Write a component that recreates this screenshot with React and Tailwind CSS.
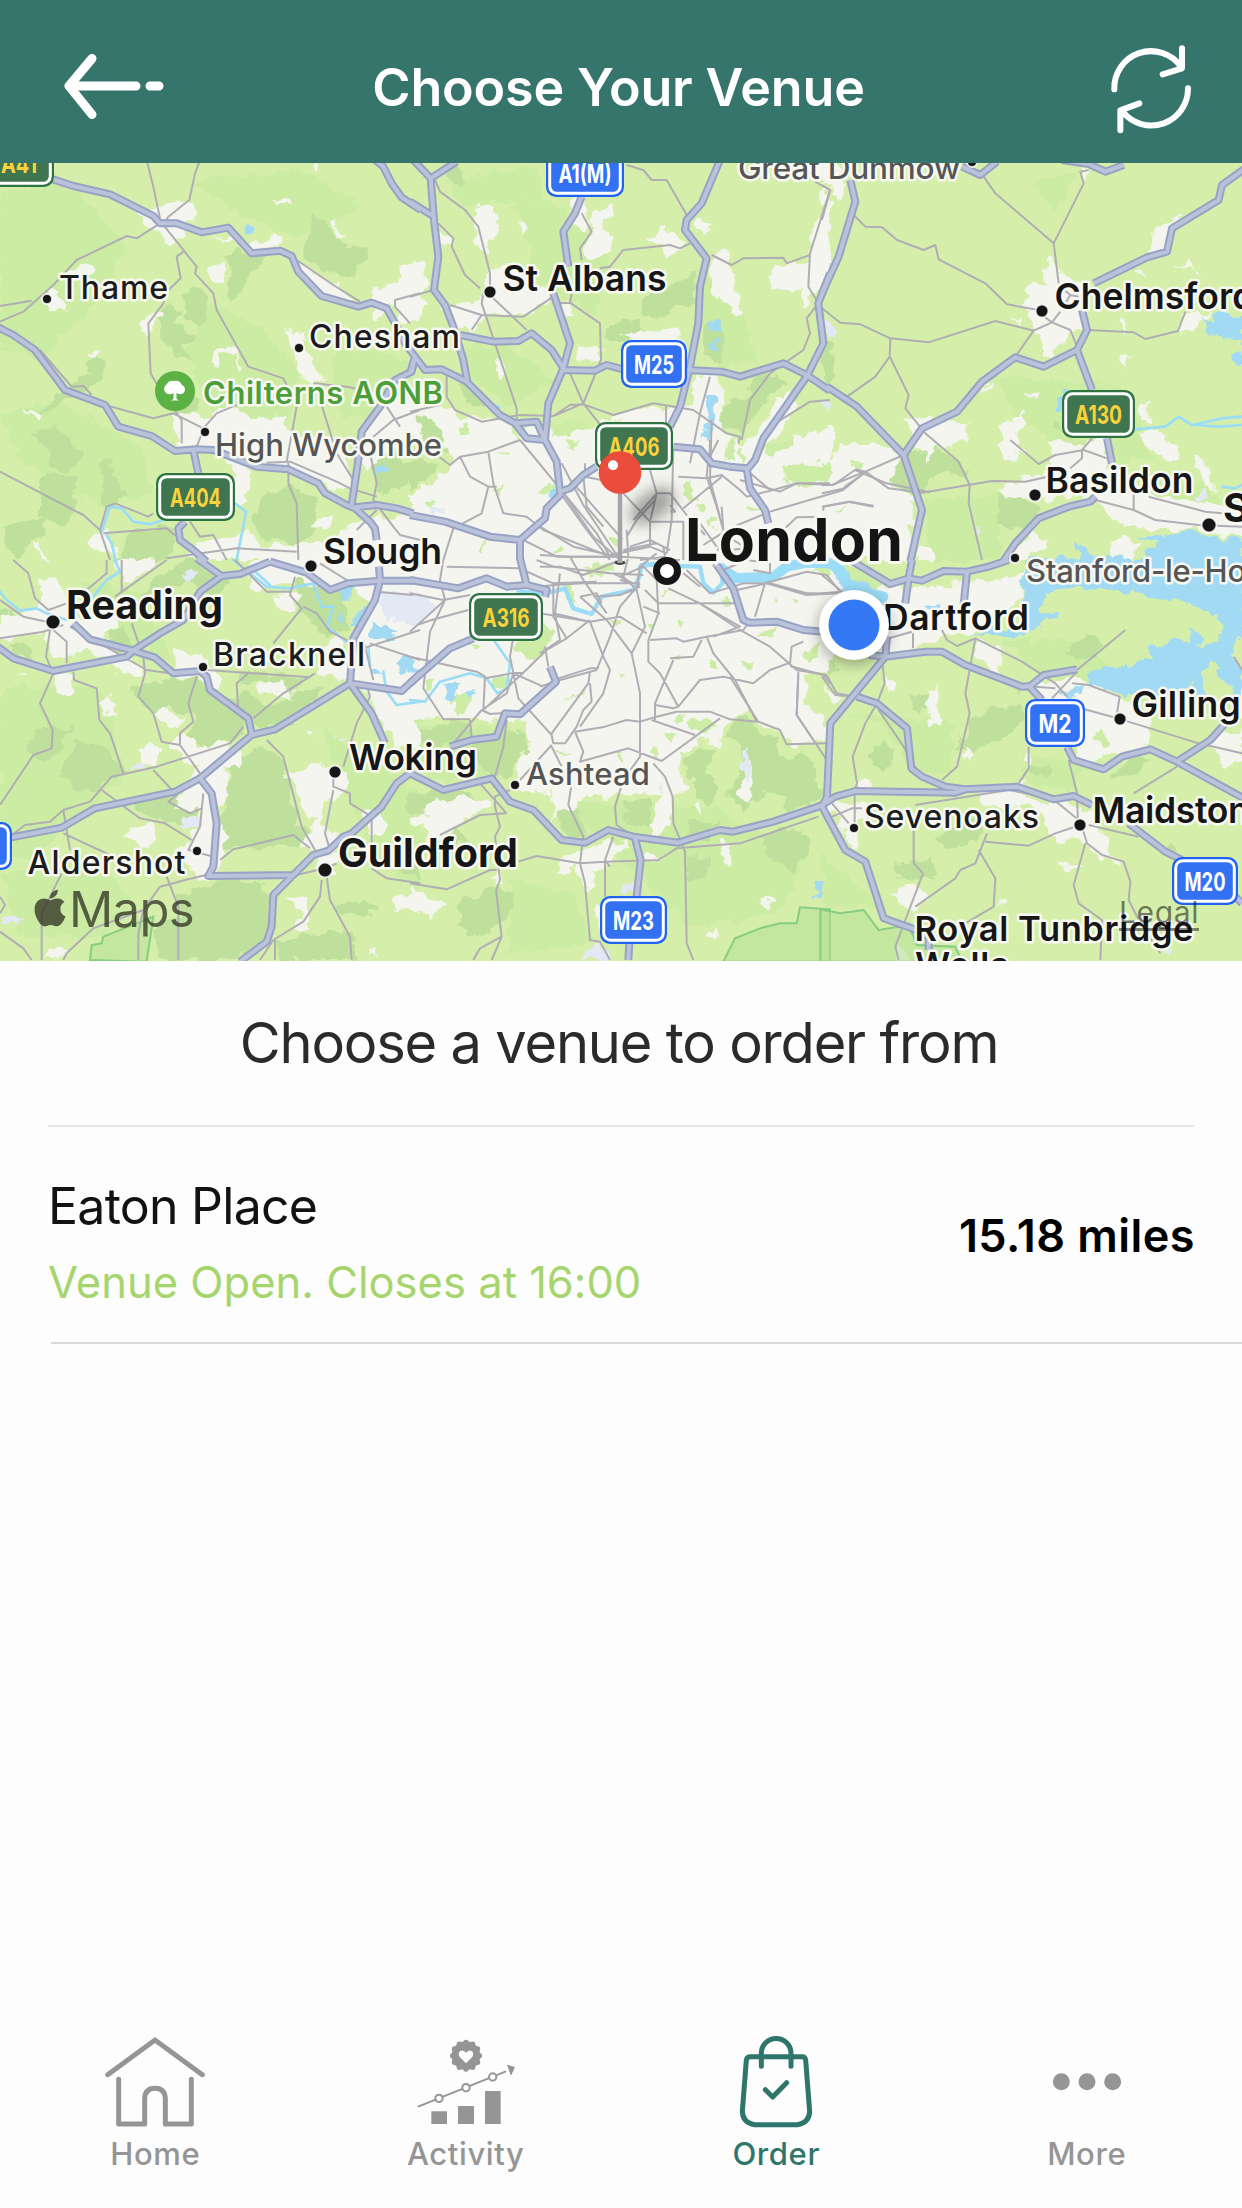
import { FaApple } from 'react-icons/fa'

// Map geometry is stored in tiles. x/y is the tile origin on the page,
// the path data inside a tile is at 3x resolution.
const TILES = [
  {
    id: 'nw',
    x: 0,
    y: 160,
    shade: [
      'M0 100L200 60 380 260 300 420 120 600 0 560Z',
      'M600 420L760 480 900 640 840 900 640 760 560 600Z',
      'M0 760L180 720 420 860 460 1000 300 1040 60 900Z',
      'M560 60L900 30 1100 140 900 240 700 160Z',
      'M1000 560L1240 600 1200 800 1000 760Z',
    ],
    forest: [
      'M935 160L985 185 1010 225 1045 270 1110 268 1100 300 1070 320 1065 350 1000 345 960 320 915 290 930 240Z',
      'M665 290L720 270 790 290 750 340 735 390 690 425 680 370 705 340Z',
      'M548 400L590 388 622 420 618 480 598 500 560 480Z',
      'M505 425L545 460 520 490 580 520 555 560 580 600 530 585 490 545 500 510 470 480Z',
      'M215 680L265 640 270 605 290 585 320 620 318 650 250 690 200 715 170 745 100 772 130 740Z',
      'M95 825L160 795 215 845 255 880 220 920 190 935 150 910 135 860Z',
      'M300 905L335 890 345 945 370 965 380 1010 340 1040 300 1035 310 960Z',
      'M120 950L160 940 235 955 215 1000 245 1030 190 1095 120 1070Z',
      'M20 1090L90 1070 140 1080 130 1120 90 1160 60 1200 10 1150Z',
      'M470 690L540 660 600 720 590 760 540 760Z',
      'M870 900L950 880 1010 920 990 960 930 930Z',
      'M780 1010L860 980 960 1010 950 1100 900 1150 790 1140 760 1090Z',
      'M1110 900L1180 880 1250 930 1200 990 1140 990Z',
      'M380 1110L520 1100 530 1170 480 1200 360 1200Z',
    ],
    urban: [
      'M415 170L470 135 580 130 590 160 550 205 560 230 510 265 470 220Z',
      'M630 232L720 240 790 245 820 222 850 240 830 262 760 270 690 245Z',
      'M620 330L650 308 675 325 670 355 640 370Z',
      'M818 122L865 112 862 130 838 138Z',
      'M195 335L265 318 275 340 230 365 195 365Z',
      'M125 420L170 390 200 450 150 445Z',
      'M420 490L470 445 505 460 470 485 430 520Z',
      'M635 570L710 555 725 625 715 630 705 570 660 585 665 620 645 620Z',
      'M850 505L925 520 905 560 940 600 970 660 940 680 890 640 890 580Z',
      'M890 310L990 365 1060 410 1050 425 960 400 900 350Z',
      'M1120 380L1180 375 1200 330 1260 305 1260 470 1210 500 1180 440 1115 470Z',
      'M525 760L620 770 690 730 760 780 860 770 860 820 1000 830 1050 900 1060 980 1000 990 860 920 740 930 740 1020 700 1030 700 920 640 870 530 870 520 800Z',
      'M960 1080L1000 1080 980 1110 930 1100Z',
      'M110 1140L150 1200 120 1200Z',
      'M260 1140L310 1110 360 1190 310 1180Z',
      'M600 1140L740 1115 790 1160 1000 1140 1060 1080 1260 1060 1260 1200 560 1200Z',
      'M985 170L1010 180 1035 235 1020 235 1005 195Z',
      'M945 10L960 10 960 35 948 35Z',
      'M1150 720L1240 700 1260 850 1150 880 1100 930 1060 860Z',
      'M80 745L115 770 105 785 85 770Z',
      'M270 570L300 565 290 590Z',
    ],
    lake: ['M733 208L748 196 766 206 752 222 738 218Z', 'M1132 912L1152 905 1162 930 1145 945 1135 935Z'],
    river: ['M305 1115L330 1040 365 1045 400 1085 450 1093 490 1080', 'M320 1125L335 1150 347 1200', 'M705 1030L738 1055 710 1200'],
    minor: [
      'M440 0L460 80 482 185',
      'M600 0L585 40 568 120 505 170 490 195',
      'M0 438L95 422',
      'M0 485L70 455 160 375 230 300 380 228 410 235 480 190',
      'M490 195L550 270 590 320 585 340 640 400 650 450 745 620 850 655 890 740 860 905',
      'M550 275L530 290 542 355 500 395 490 430 445 490 452 640 480 690 545 780 545 850',
      'M120 570L215 680 250 678 275 705',
      'M315 735L460 775 520 760 610 805 650 760 720 730',
      'M890 300L1000 375 1080 425',
      'M865 905L865 970 890 1030 895 1200',
      'M800 908L870 905 1010 965 1050 985 1130 1010',
      'M960 720L1010 880 1060 960',
      'M0 935L220 1050 250 1065 300 1110 330 1200',
      'M300 1110L320 1040 345 1030 445 1070 460 1060',
      'M310 1120L500 1105 530 1130',
      'M570 1085L600 1130 640 1125 680 1200',
      'M500 1195L710 1165 890 1175',
      'M1230 490L1185 440 1185 420 1260 400',
      'M1120 830L1180 780 1260 750M1160 740L1200 800',
      'M1110 880L1130 970 1120 1020 1180 1100 1200 1125 1260 1140',
      'M940 670L1040 680 1090 690',
      'M1130 1050L1070 1110',
      'M610 810L590 860',
    ],
    major: [
      'M150 55L220 78 330 103 460 168 480 190 530 190 605 217 685 203 755 280 840 272 875 288 895 335 965 408 1075 440 1115 428 1160 445 1185 490 1215 550 1245 590',
      'M1125 0L1150 20 1175 70 1205 112 1262 150',
      'M-10 500L40 525 105 570 195 690 315 735 355 800 455 828 525 873 590 868 640 870 770 920 865 928 955 970 975 1000 1040 1035 1065 1045 1110 1085 1125 1105 1130 1140',
      'M580 870L595 940',
      'M555 1085L535 1105 540 1140 580 1170 620 1205',
      'M1245 590L1235 635 1185 660 1140 740 1085 815 1075 900 1055 1035',
      'M1065 1042L1130 1035 1190 1045 1240 1060',
    ],
  },
  {
    id: 'n',
    x: 410,
    y: 160,
    shade: [
      'M310 130L420 120 600 300 560 460 400 380Z',
      'M860 320L1000 460 1040 600 930 620 880 480Z',
      'M100 60L380 20 400 120 160 140Z',
      'M160 560L300 560 440 660 300 740 180 650Z',
    ],
    forest: [
      'M700 420L760 380 830 360 860 330 860 430 810 440 750 470 690 470Z',
      'M590 510L640 480 690 490 700 520 640 545 590 540Z',
      'M890 500L935 480 935 600 905 610 885 590Z',
      'M1040 650L1100 640 1130 670 1090 700 1040 760 990 820 935 800 940 740 1000 720Z',
      'M0 765L70 770 110 830 120 880 60 860 0 820Z',
      'M0 905L70 910 90 940 0 990Z',
      'M110 30L155 30 160 75 125 70Z',
      'M150 650L210 700 250 760 150 710Z',
    ],
    urban: [
      'M185 165L215 135 250 150 268 200 235 240 245 280 205 260 185 240 205 215Z',
      'M320 200L335 185 355 205 335 225Z',
      'M240 330L300 320 420 400 400 440 340 470 240 460 190 520 120 500 105 440 210 420Z',
      'M60 210L120 225 125 250 95 255Z',
      'M0 310L30 310 60 370 40 430 0 440Z',
      'M560 150L615 125 610 170 580 200 605 240 590 285 540 300 520 280 540 210Z',
      'M480 110L520 120 540 200 515 215 490 160Z',
      'M715 235L765 205 830 245 810 260 770 290 750 255Z',
      'M845 190L880 165 910 200 885 235Z',
      'M905 310L930 270 965 290 970 320 975 400 1000 460 975 470 960 440 930 410 900 395Z',
      'M1070 350L1110 315 1180 310 1200 250 1190 220 1230 180 1260 180 1260 360 1210 400 1200 460 1180 450 1180 390 1090 385Z',
      'M500 560L560 550 570 600 520 605 500 590Z',
      'M640 520L720 515 800 500 830 560 840 600 700 560Z',
      'M425 430L470 420 490 470 430 450Z',
      'M255 590L290 600 295 640 270 660Z',
      'M0 720L60 715 150 770 250 780 330 830 360 780 430 800 530 810 690 735 760 745 840 730 870 640 935 620 935 740 940 820 1000 860 1070 790 1100 710 1150 695 1150 740 1120 800 1060 860 1260 800 1260 1210 0 1210 0 1000 90 960 120 900 80 790 0 750Z',
      'M1235 90L1260 80 1260 180 1230 190Z',
      'M1190 0L1260 0 1260 60 1240 60Z',
    ],
    park: [
      'M430 790L500 770 535 800 480 830 420 840Z',
      'M1120 925L1260 900 1260 970 1150 980Z',
      'M1050 860L1150 835 1140 870 1080 890Z',
      'M985 880L1005 860 1000 920Z',
      'M35 1035L70 1015 60 1050Z',
      'M205 1170L235 1120 220 1180Z',
      'M250 990L285 985 265 1010Z',
      'M425 1170L450 1155 470 1170 440 1180Z',
      'M595 1135L640 1130 620 1170Z',
      'M150 790L175 800 160 825Z',
      'M270 885L295 880 280 890Z',
      'M830 970L850 990 870 1030 840 1010Z',
      'M380 1000L430 970 440 990 400 1010Z',
      'M590 790L640 780 600 800Z',
    ],
    airport: ['M50 1050L100 1040 105 1060 70 1062Z', 'M1240 720L1260 720 1260 755 1245 750Z'],
    lake: [
      'M905 482L935 478 935 508 905 510Z',
      'M898 545L920 540 915 575 900 570Z',
      'M895 705L922 705 912 800 885 842 868 835 880 780 892 760Z',
      'M408 1015L430 990 445 995 425 1018Z',
      'M250 735L275 735 270 755Z',
    ],
    minor: [
      'M75 60L90 95 165 150 205 200 240 340 240 390',
      'M85 190L130 235 125 260 165 345 210 385',
      'M0 410L70 390',
      'M120 435L215 465 340 470 430 410',
      'M220 400L215 430 320 745 320 790',
      'M245 410L350 510',
      'M515 160L545 215 510 265 515 300',
      'M215 465L185 510',
      'M450 430L480 428 570 490 573 600 520 730 430 768',
      'M480 640L520 730 575 800',
      'M480 428L485 400',
      'M650 15L700 30 725 60 770 60 830 165',
      'M570 325L600 320 640 270 780 255 810 265 840 250',
      'M905 285L965 315 1000 295 1120 293 1130 310 1200 285',
      'M1215 65L1260 90 1200 280 1195 380 1225 430 1190 475 1200 520 1180 570 1080 640 1020 720 995 840',
      'M110 640L110 710 135 750 215 785 330 765 430 768 480 735 520 733 610 765 730 730 850 750 950 820 990 830 985 850',
      'M900 650L870 760 840 910',
      'M905 780L900 960 930 1070',
      'M0 825L120 915 150 890 235 875 330 840',
      'M150 890L180 950 235 980 260 980',
      'M235 875L250 970 280 1060 350 1070 400 1110 600 1190',
      'M235 980L215 1060 130 1105 100 1200',
      'M330 840L560 1120 600 1190',
      'M455 910L520 1035 590 1140 630 1200',
      'M455 1005L530 1110 600 1200',
      'M0 755L90 735',
      'M340 1140L440 1190 620 1190',
      'M525 910L525 950 600 965',
      'M768 740L768 810',
      'M990 960L1110 995 1160 970 1260 970',
      'M1260 720L1200 725 1080 800',
    ],
    major: [
      'M10 0L62 55 140 5',
      'M62 55L72 180 85 290 72 390 105 435 130 500 160 600 172 665',
      'M0 125L72 170',
      'M150 525L250 545 325 543 365 520 425 570 460 625',
      'M515 110L495 160 460 215 475 320',
      'M430 400L480 550 460 625 415 730 405 840',
      'M460 630L555 632 590 615 640 628',
      'M830 630L935 635 990 650 1120 610 1190 645 1260 692',
      'M930 0L875 130 830 180 825 210 890 295 870 380 865 490 840 620 810 740 780 800',
      'M0 640L15 590 45 630 95 628 130 645 170 665 270 765 315 790 380 785 405 840 350 835 315 790',
      'M405 840L440 905 450 995 480 985 520 945 560 920',
      'M455 1000L410 1045 405 1075 330 1140 330 1200',
      'M0 1065L105 1085 240 1130 330 1140',
      'M790 860L870 868 905 910 960 920 1010 925 1020 985 1065 1050 1075 1090',
      'M1010 930L1035 900 1060 835 1190 650 1215 600 1240 550 1225 430 1260 340',
    ],
  },
  {
    id: 'ne',
    x: 822,
    y: 160,
    shade: ['M500 640L900 680 1000 900 800 900 600 780Z', 'M620 60L760 40 700 160Z', 'M300 1020L520 1000 540 1200 320 1200Z', 'M900 1010L1160 960 1200 1060 1000 1040Z'],
    forest: [
      'M0 540L35 545 42 640 15 680 0 650Z',
      'M210 905L300 870 370 870 440 930 430 950 350 940 290 1000 200 980Z',
      'M520 1000L600 1010 650 1040 640 1090 580 1105 530 1090Z',
      'M945 1010L1000 1010 1030 1055 990 1055Z',
      'M690 790L715 780 720 810 695 805Z',
    ],
    urban: [
      'M0 0L50 0 70 80 60 115 35 110 30 70 0 70Z',
      'M0 180L30 185 20 290 0 310Z',
      'M610 380L665 375 660 330 690 285 720 340 790 380 790 510 740 520 690 590 665 590 655 520 620 480Z',
      'M985 215L1030 180 1075 170 1050 205 1035 290 985 270Z',
      'M1055 325L1100 295 1130 340 1100 320Z',
      'M550 475L590 475 590 490Z',
      'M890 590L920 585 905 615Z',
      'M890 470L905 470 915 535 895 500Z',
      'M1090 460L1170 460 1120 500 1070 520Z',
      'M605 695L655 700 640 718Z',
      'M460 700L515 655 500 680Z',
      'M245 775L330 775 350 790 445 785 430 840 370 850 320 900 280 850Z',
      'M530 795L605 755 615 780 580 820 600 890 550 895 535 850Z',
      'M685 830L760 860 850 830 860 920 1000 1000 1200 1040 1260 1060 1260 1140 1130 1110 1000 1110 870 1090 820 1020 700 1010 600 1020 520 985 700 930 690 870Z',
      'M950 815L1010 810 1080 900 1060 910 960 840Z',
      'M945 740L985 735 990 780 950 780Z',
      'M1120 890L1140 890 1185 1000 1150 980Z',
      'M0 930L50 855 150 850 240 890 200 960 220 990 275 1000 265 1200 0 1200Z',
      'M560 1180L620 1120 680 1150 600 1200Z',
      'M860 1150L900 1130 960 1150 930 1200 870 1200Z',
      'M290 1170L330 1170 330 1200 290 1200Z',
      'M940 330L960 330 965 360Z',
      'M780 30L805 30 785 65Z',
    ],
    park: ['M35 1045L60 1040 50 1055Z', 'M85 910L130 900 110 930Z'],
    airport: ['M10 480L30 485 30 525 10 525Z', 'M5 730L35 735 20 755Z', 'M1110 1010L1155 990 1160 1020 1120 1025Z', 'M450 1110L480 1115 460 1125Z'],
    lake: [
      'M1120 475L1160 480 1180 455 1260 465 1260 545 1210 540 1170 525 1150 490Z',
      'M1225 600L1260 575 1260 615 1230 612Z',
      'M705 715L722 690 745 695 720 750 705 750Z',
      'M930 1120L1030 1130 1060 1115 1100 1115 1260 1145 1260 1200 780 1200 765 1145 830 1185 960 1200 1010 1150Z',
    ],
    river: ['M940 808L1030 800 1070 770 1110 795 1200 775 1260 770', 'M1120 795L1190 800 1260 795', 'M1200 980L1240 985 1260 975'],
    minor: [
      'M485 50L520 100 695 250',
      'M800 30L775 35 785 70 695 250 710 370',
      'M95 165L130 200 180 202 225 240 305 270 340 255 350 298 490 370 555 433 650 450',
      'M0 445L55 488 115 493 205 535 320 547 520 483 635 512 690 487 745 510 765 560',
      'M205 535L203 590 260 705 250 745 310 820 410 905 443 975 440 1030 480 1200',
      'M203 590L160 650 75 710',
      'M635 512L580 590',
      'M800 510L935 517 970 537 1068 513 1090 455',
      'M720 385L745 405 770 410M745 405L730 430',
      'M660 465L690 487 715 455',
      'M245 885L130 935 30 975 0 975',
      'M100 928L130 935 200 985 300 998 510 963 610 965 700 945',
      'M130 935L70 985 0 1000',
      'M0 1040L80 1025 155 1040',
      'M565 840L650 912 700 885 785 870 855 895',
      'M810 835L780 870 780 895 745 925',
      'M820 1020L935 1050 1000 1080 1130 1095 1260 1100',
      'M935 1050L935 1000M980 1010L1150 1055 1200 1060',
      'M0 75L25 90 0 180',
    ],
    major: [
      'M420 20L475 45 525 5',
      'M720 0L800 12 850 35 905 15',
      'M1270 25L1200 75 1190 120 1050 205 1035 275 975 292 815 370',
      'M85 60L100 125 50 290 0 400',
      'M15 680L105 740 245 885 300 1050 265 1205',
      'M245 885L300 805 405 755 480 665 580 592 665 620 765 570 795 510 780 450',
      'M765 570L810 690',
      'M855 835L870 910',
      'M820 1010L805 1025 740 1040 650 1075 580 1150 545 1202',
    ],
  },
  {
    id: 'sw',
    x: 0,
    y: 560,
    shade: ['M0 380L300 380 380 640 100 900 0 880Z', 'M240 60L420 100 520 300 300 220Z', 'M960 500L1260 700 1260 1000 1120 900Z', 'M0 940L300 900 420 1040 280 1140 60 1120Z'],
    forest: [
      'M85 540L130 500 220 505 180 560 160 600 90 590Z',
      'M180 640L220 540 300 560 380 640 330 650 290 700 230 690Z',
      'M380 400L460 360 590 350 640 400 740 480 730 520 640 560 560 540 590 480 520 440 470 470 420 430Z',
      'M560 0L700 60 640 110 560 60 420 120 460 60Z',
      'M700 600L790 560 840 590 900 800 960 830 860 860 740 860 660 870 680 690Z',
      'M540 1000L680 960 800 970 810 1100 780 1150 700 1200 480 1200 460 1110 540 1070Z',
      'M830 1150L940 1120 1060 1110 1070 1200 830 1200Z',
      'M330 220L370 200 400 260 370 280 320 250Z',
      'M730 330L920 350 880 400 800 360 720 370Z',
      'M640 430L740 400 820 440 900 400 980 390 870 490 780 500Z',
      'M380 730L500 700 600 740 560 800 470 780Z',
      'M880 60L1000 60 1060 200 980 230 900 150Z',
      'M0 150L40 160 30 200 0 200Z',
      'M20 250L90 260 110 300 40 290Z',
      'M1010 1040L1100 1020 1130 1060 1030 1070Z',
      'M1170 870L1260 880 1260 960 1190 930Z',
    ],
    urban: [
      'M115 60L160 45 195 90 190 130 260 180 370 130 350 200 310 230 420 320 440 350 350 330 270 270 160 300 130 220 0 240 0 170 110 150 120 110Z',
      'M300 430L320 405 350 440 350 470 305 460Z',
      'M160 340L220 345 210 400 165 395Z',
      'M450 460L500 445 555 480 530 510 480 495Z',
      'M530 270L610 280 630 320 670 350 670 400 630 390 600 350 530 350Z',
      'M420 570L450 550 485 580 460 610 420 600Z',
      'M510 550L560 520 600 560 680 545 720 570 730 620 680 620 680 700 660 750 680 880 650 950 600 960 550 900 500 930 560 850 600 800 590 740 510 740 560 690 600 620 540 590Z',
      'M370 815L460 780 455 860 430 860Z',
      'M850 650L960 615 1050 640 1050 690 980 720 960 800 1010 820 1010 870 950 900 960 940 1010 950 1010 900 1040 880 900 860 950 790 920 740 880 680Z',
      'M860 1010L930 1010 930 1110 900 1120 880 1110 910 1050Z',
      'M765 370L820 365 885 390 880 420 840 400 780 400Z',
      'M820 110L900 90 890 150 840 150Z',
      'M350 0L460 0 420 50 370 70Z',
      'M720 30L800 0 1260 0 1260 560 1180 560 1120 440 1090 360 1040 350 1060 240 1100 130 1050 60 990 100 900 60 780 90Z',
      'M960 260L1030 230 1050 360 960 340Z',
      'M1170 1000L1260 1010 1260 1060 1170 1040Z',
      'M150 1165L210 1160 160 1200 130 1200Z',
      'M1080 770L1130 740 1170 800 1120 830Z',
      'M920 515L940 520 930 540Z',
      'M1110 1155L1130 1155 1120 1190Z',
      'M980 0L1150 0 1130 40 1000 50Z',
      'M50 340L70 340 60 352Z',
    ],
    airport: [
      'M1150 95L1260 100 1260 195 1150 175Z',
      'M400 605L440 600 445 630 400 632Z',
      'M535 800L570 765 600 765 590 800 540 808Z',
      'M550 40L590 30 580 55 560 65Z',
      'M5 1075L75 1075 50 1095 10 1095Z',
      'M1005 530L1030 530 1025 550Z',
    ],
    lake: [
      'M1008 95L1035 82 1062 92 1050 125 1020 128Z',
      'M1115 185L1150 190 1186 215 1170 238 1118 238Z',
      'M1075 145L1095 150 1082 190 1060 195Z',
      'M1188 305L1240 292 1256 330 1205 348Z',
      'M1010 150L1030 165 1040 190 1010 190Z',
      'M1115 320L1140 322 1150 345 1120 342Z',
      'M1060 358L1090 358 1070 370Z',
    ],
    river: [
      'M0 95L20 120 60 152 110 145 140 160 200 180',
      'M280 110L320 60 360 35 345 0',
      'M700 0L750 40 800 80 870 85 940 70 965 140 1000 140 980 200 1040 245',
      'M760 30L810 75M1150 335L1160 395 1190 435 1260 425',
      'M1105 260L1110 320',
    ],
    reserve: ['M270 1200L275 1155 305 1150 310 1130 460 1070 440 1205Z'],
    minor: [
      'M40 0L85 40 105 115 145 150',
      'M320 0L320 40 260 90M145 150L200 130',
      'M365 0L365 95M500 0L345 110',
      'M0 235L130 215 190 195',
      'M0 120L70 170 140 185',
      'M150 210L138 290 160 340 120 430 158 510 155 565 100 585 0 735',
      'M160 210L200 245 200 310',
      'M220 335L222 360 290 385 298 480 330 520 370 640',
      'M395 190L430 290 435 340 415 410 460 460 485 545 540 555 600 640',
      'M590 350L565 430 580 485 540 520 540 555',
      'M210 200L290 245 440 330 510 340',
      'M620 330L930 352',
      'M945 340L850 400 760 475',
      'M730 500L690 550 470 620 335 650 270 725 190 750 150 785 75 795 30 830',
      'M305 690L420 775 495 790 575 840',
      'M460 630L530 705 505 725 570 760 605 745',
      'M610 700L600 800 565 870 640 890',
      'M190 820L330 885M190 750L210 870',
      'M185 940L125 1060 125 1200',
      'M660 900L700 868 880 825 930 865',
      'M800 540L850 590 905 800 945 870',
      'M1000 690L975 820 990 870',
      'M1000 640L1000 680 1050 700 1050 730 1115 770 1115 850',
      'M715 450L710 370 750 335',
      'M820 250L905 145 870 105 885 50',
      'M705 0L800 95 875 95',
      'M910 140L950 160 990 215 1090 265 1260 210',
      'M1090 240L1120 360M1110 250L1260 300',
      'M1100 375L1110 410 1070 490 1030 620',
      'M965 960L960 1010 910 1085 820 1140 780 1200',
      'M980 950L990 1020 1050 1130 1055 1200M825 1140L825 1200',
      'M1115 925L1160 955 1260 970',
      'M190 1200L200 1180 280 1105 430 1050 480 980 555 960 640 940',
      'M500 950L535 1040 535 1200M430 1050L415 1120 415 1200',
      'M0 1115L70 1165 95 1200M0 1060L15 1035 0 1010',
      'M960 10L1040 60M1130 95L1240 105',
      'M890 945L975 925 1010 910',
    ],
    major: [
      'M-10 258L40 295 160 333 380 290 400 272 480 220 550 180 600 95 665 48 720 42 810 5',
      'M590 -5L665 48',
      'M220 190L270 238 400 272 465 293 520 340 600 333 620 350 630 390 745 475 755 520',
      'M810 5L920 38 990 90 1045 70 1140 62 1240 62',
      'M1137 20L1140 62 1125 120 1060 235 1050 370',
      'M1050 370L1205 393 1262 340',
      'M1050 370L825 508 755 525 600 655 525 695 285 745 185 803 30 833',
      'M600 655L635 700 650 790 640 920 625 948 885 945',
      'M1050 370L1115 460 1155 550',
      'M720 1205L800 1145 815 1100 820 1005 940 885 985 872 1030 830 1055 820 1145 740 1190 670 1230 640',
    ],
  },
  {
    id: 's',
    x: 410,
    y: 560,
    shade: ['M430 720L900 740 1200 880 1100 1060 840 1100 600 860Z', 'M300 960L500 1000 540 1150 300 1180Z', 'M0 500L300 500 260 640 60 660Z'],
    forest: [
      'M940 520L1000 470 1060 520 1110 540 1110 600 1180 570 1210 610 1230 700 1200 740 1130 760 1130 700 1060 700 1000 760 950 700 1000 620 990 560Z',
      'M820 600L870 550 910 570 890 640 930 680 900 740 850 700Z',
      'M190 540L260 510 340 515 360 570 300 640 250 650 190 600Z',
      'M20 520L120 480 180 500 160 550 60 560Z',
      'M0 700L60 690 150 690 230 730 150 740 60 770 0 760Z',
      'M40 810L140 800 180 850 120 850Z',
      'M150 1030L250 980 310 1010 290 1070 200 1130 150 1100Z',
      'M1050 830L1160 800 1200 860 1160 930 1080 900Z',
      'M830 790L930 780 900 830 840 840Z',
      'M440 760L500 740 530 820 460 840Z',
      'M640 730L720 710 720 800 660 790Z',
      'M830 900L900 890 890 950 830 960Z',
      'M410 240L480 225 480 290 430 315 410 290Z',
    ],
    urban: [
      'M0 -5L1265 -5 1265 330 1180 350 1190 430 1260 500 1250 540 1150 555 1110 515 1040 490 1015 440 990 470 940 500 930 570 880 530 800 580 830 690 790 710 780 800 730 830 720 800 750 710 700 690 590 710 530 705 500 740 440 760 430 790 430 700 300 690 360 560 340 490 180 480 100 470 0 490Z',
      'M50 740L130 710 220 715 235 740 150 790 80 850 45 860Z',
      'M0 770L80 760 80 780 30 800 0 800Z',
      'M480 880L600 850 660 840 600 900 550 940 550 980 530 990 500 930 440 940Z',
      'M560 1030L590 1040 600 1110 570 1120Z',
      'M990 690L1005 580 1025 600 1030 720 1015 735 980 700Z',
      'M850 740L870 725 880 765Z',
      'M930 850L970 850 965 920 940 900Z',
      'M1050 1020L1090 1005 1070 1055Z',
      'M890 1130L920 1105 920 1145Z',
      'M0 980L60 1020 110 1030 60 1065 0 1050Z',
      'M240 940L270 930 285 970 260 970Z',
      'M680 890L720 880 750 900 700 910Z',
    ],
    park: [
      'M310 260L380 230 400 190 440 220 420 250 400 290 340 300Z',
      'M460 75L480 70 500 130 470 120Z',
      'M245 350L290 345 290 390 250 385Z',
      'M125 410L165 400 190 415 150 470 130 450Z',
      'M40 350L80 360 70 390 45 385Z',
      'M170 255L215 250 195 270Z',
      'M610 180L640 175 625 200Z',
      'M520 25L580 30 580 60 545 50Z',
      'M800 170L830 180 810 195Z',
      'M700 205L720 200 715 220Z',
      'M1090 130L1105 115 1100 150Z',
      'M1140 115L1165 125 1155 140Z',
      'M1060 210L1110 205 1100 230 1045 240Z',
      'M780 300L815 290 810 310Z',
      'M900 310L930 305 930 330 900 325Z',
      'M985 310L1020 310 1010 325 985 325Z',
      'M625 345L650 350 640 365Z',
      'M805 465L825 460 825 490 810 490Z',
      'M765 525L795 530 790 550 770 540Z',
      'M840 485L890 480 920 490 880 520 840 510Z',
      'M435 570L485 572 460 590Z',
      'M615 585L640 585 640 615Z',
      'M1180 290L1240 250 1230 290 1200 300Z',
      'M470 420L530 380 500 410Z',
      'M1200 30L1260 20 1260 55Z',
      'M930 110L960 115 960 140 930 130Z',
      'M730 570L745 575 745 595 730 590Z',
      'M10 480L60 475 30 495Z',
    ],
    airport: ['M0 105L50 110 80 130 40 190 0 200Z', 'M990 600L1020 565 1025 640 1005 670Z', 'M630 985L655 965 665 995 640 1000Z', 'M510 1190L560 1145 600 1170 600 1200 510 1200Z', 'M740 680L755 675 752 710Z'],
    lake: ['M100 372L145 362 142 412 105 418Z', 'M0 298L20 308 20 340 0 345Z', 'M1222 965L1236 970 1228 1010 1207 1010Z', 'M170 400L200 405 175 412Z'],
    river: ['M0 420L45 425 90 365 180 340 230 355 262 400 290 385 300 310 255 245'],
    riverWide: ['M325 95L410 100 465 85 490 145 545 162 575 110 670 90 688 50 695 15 740 12'],
    reserve: ['M940 1205L975 1135 1050 1105 1110 1090 1160 1090 1170 1042 1260 1048 1260 1205Z'],
    minor: [
      'M0 100L100 120 180 105',
      'M100 0L90 60 105 120 0 215',
      'M175 150L65 180 20 195',
      'M105 120L60 215 50 300 40 385 100 478 180 478',
      'M0 290L200 335 225 350 220 450',
      'M220 450L340 338 410 270 470 235 540 180',
      'M310 230L300 290 325 415 425 525 430 550 465 550 500 500 520 450 545 425',
      'M215 450L240 462 330 455M130 550L215 450 290 400 310 340 400 380',
      'M225 355L305 340 340 338',
      'M405 260L415 320',
      'M445 355L540 325 565 325',
      'M425 520L535 370 540 335M545 425L540 370',
      'M425 560L455 620M425 555L330 660',
      'M290 480L280 560 255 650',
      'M180 480L185 530',
      'M495 515L585 500 650 480 690 485 740 470 800 455 900 455 960 478 1045 485 1110 510 1130 553 1250 550',
      'M495 515L520 575 510 605 655 565 755 603 930 475',
      'M690 480L690 590 640 660 615 740 620 795 670 830',
      'M725 480L855 525',
      'M485 670L475 735 520 830 510 910 525 970 540 1140 570 1145 600 1200',
      'M325 905L380 888 510 910 585 905 745 900 800 865 990 850 1225 770',
      'M730 610L765 650 788 710 790 790 825 875 830 1150 850 1200',
      'M610 830L585 900 585 1010M585 900L600 920',
      'M0 970L110 988 240 930 260 930',
      'M300 690L255 710 255 740 270 800 255 830 270 960 258 990 275 1130 245 1200',
      'M275 1130L210 1165 190 1200M210 670L290 760',
      'M90 825L210 765 290 760',
      'M960 350L1045 485',
      'M1165 345L1160 465 1250 600',
      'M1140 318L1240 345 1260 370',
      'M380 0L430 20 600 40 700 45',
      'M430 70L430 170 470 235M430 160L540 185',
      'M340 30L430 70 560 65M110 20L330 25',
      'M830 30L900 100 1000 70 1080 70 1190 100 1260 100',
      'M600 1045L640 1040',
    ],
    major: [
      'M0 60L145 85 230 55 290 80 350 75 410 90 405 110',
      'M330 -5L350 75',
      'M0 370L120 265 190 235',
      'M420 320L438 365 330 463 285 460 260 530 185 540 120 560 ',
      'M0 640L100 690 245 655 300 725 370 750 455 840 525 848 595 810 670 830 805 848 930 810 970 815 1090 785 1225 740 1236 735',
      'M675 835L692 900 680 1010',
      'M658 1150L655 1200',
      'M920 15L970 85 1000 180 1020 188 1100 185 1180 210 1240 215',
    ],
  },
  {
    id: 'se',
    x: 822,
    y: 560,
    shade: ['M60 460L400 480 380 640 280 640 200 500Z', 'M540 240L780 240 880 360 640 340Z', 'M0 880L180 1040 0 1040Z', 'M600 580L800 620 740 700 600 660Z'],
    forest: [
      'M735 270L790 230 840 250 820 290 770 310Z',
      'M440 500L510 440 590 440 600 490 540 540 450 580 400 570Z',
      'M260 410L350 390 350 460 270 450Z',
      'M870 650L920 600 980 590 940 650 880 665Z',
      'M215 905L330 895 330 965 230 960Z',
      'M340 840L440 780 480 790 460 840 380 860Z',
      'M130 590L190 540 220 570 180 640Z',
      'M0 310L40 300 50 340 20 350Z',
      'M560 360L600 370 590 400Z',
      'M1000 860L1050 850 1060 900Z',
      'M620 625L680 620 680 660 640 650Z',
    ],
    urban: [
      'M0 0L85 0 260 90 600 50 610 0 260 0 610 0 600 120 450 225 370 230 190 300 180 280 0 280Z',
      'M455 240L540 260 530 340 460 290Z',
      'M310 380L350 375 350 500 325 505Z',
      'M190 340L220 370 200 400Z',
      'M640 370L760 340 890 410 1000 480 960 570 880 580 790 610 760 580 720 480 640 420Z',
      'M1160 540L1260 500 1260 610 1200 620Z',
      'M425 560L460 600 420 605Z',
      'M600 600L625 570 620 640 590 690 680 740 690 720 780 730 850 830 860 880 890 910 840 900 770 830 700 850 660 760 530 710 620 650Z',
      'M55 780L110 770 110 860 70 850Z',
      'M100 660L130 650 160 690 110 700Z',
      'M0 740L130 720 130 770 60 780Z',
      'M215 1000L270 970 310 990 320 1020 270 1060 230 1030Z',
      'M705 910L770 905 740 935Z',
      'M535 1020L555 1010 540 1050Z',
      'M225 1150L265 1200 225 1200Z',
      'M460 700L600 690 650 740 480 730Z',
      'M820 500L865 520 880 560 830 560Z',
      'M0 370L60 410 30 420Z',
    ],
    park: ['M830 510L870 550 840 560 825 530Z', 'M90 10L200 60 130 90 80 60Z'],
    airport: ['M1020 1175L1060 1175 1040 1190Z'],
    lake: [
      'M610 -5L1265 -5 1265 230 1235 235 1230 300 1260 330 1260 400 1230 390 1190 330 1160 310 1140 350 1150 400 1100 395 1110 360 1080 400 900 405 800 370 800 330 860 320 920 325 990 290 980 260 1050 235 1130 255 1180 245 1195 190 1150 140 1090 130 930 100 840 90 700 85 660 130 660 160 710 155 710 168 665 180 660 200 600 230 440 225 600 195Z',
      'M1100 200L1140 250 1110 265Z',
      'M10 0L50 10 90 60 150 80 195 120 200 170 100 140Z',
      'M310 140L360 130 370 160 320 150Z',
      'M720 400L790 380 780 410 740 420Z',
    ],
    reserve: ['M-5 1048L55 1060 125 1050 170 1110 260 1095 285 1155 400 1160 420 1205 -5 1205Z'],
    minor: [
      'M360 210L375 240 405 258 460 235 600 305 700 370 735 410',
      'M765 330L910 210',
      'M460 235L430 400 443 460 405 620 360 660',
      'M180 300L188 370 165 430 130 490 92 590 105 670 98 690 98 800',
      'M170 450L245 560 290 640',
      'M0 350L40 405 100 410',
      'M640 380L700 385M765 335L690 415',
      'M750 370L800 375 893 410 885 460',
      'M760 440L870 470 1130 550 1260 580',
      'M620 560L620 625 590 670',
      'M740 600L765 700 768 790',
      'M935 700L1065 620',
      'M30 770L90 745 120 745M30 730L80 790',
      'M280 735L560 690 690 715 770 780',
      'M275 800L275 910 303 940 250 1080 220 1160 230 1200',
      'M490 845L620 857 700 820 775 795',
      'M495 820L460 910 415 930 400 955 280 1040',
      'M470 870L520 955 515 1040 430 1090',
      'M790 850L755 975 770 1030 840 1080 835 1200',
      'M780 800L795 850 840 885 905 905 925 965 920 1020 950 1080 1015 1180',
      'M800 795L950 830',
      'M273 220L273 265M200 235L270 215',
      'M1235 290L1260 330',
      'M0 45L60 95 0 100',
    ],
    major: [
      'M85 0L205 72 260 55 300 62 365 33 435 35 500 20 560 0',
      'M270 0L260 55 250 130',
      'M435 35L425 135',
      'M195 230L190 290 310 275 360 275 430 315 600 380 625 378 665 345 765 328',
      'M140 285L190 290 25 490 15 710 0 740',
      'M620 378L660 420',
      'M105 410L165 430 255 505 268 625 300 650 370 680 430 688 585 680 695 718 755 708 810 735',
      'M0 735L40 710 100 693 400 698 430 688',
      'M0 740L70 870 130 905 185 1075 270 1105 320 1130 320 1170',
      'M735 560L755 600 845 628 900 590 985 568 1065 605 1265 715',
      'M1065 605L1165 540 1210 490',
      'M920 790L1030 875 1080 900',
      'M1235 1005L1260 1030',
    ],
  },
  {
    id: 'centre',
    x: 540,
    y: 440,
    park: [
      'M160 375L225 365 220 395 165 390Z',
      'M35 325L75 325 60 340Z',
      'M425 130L460 130 460 170 430 170Z',
      'M500 240L525 235 520 270Z',
      'M465 200L500 205 490 218Z',
      'M730 80L830 70 830 115 740 135Z',
      'M880 205L910 200 895 215Z',
      'M410 535L440 540 420 555Z',
      'M360 460L385 460 370 470Z',
      'M90 0L115 5 100 30 85 25Z',
      'M560 10L590 0 575 60 560 60Z',
      'M620 200L665 205 640 215Z',
      'M910 380L1000 400 1050 440 960 440 920 410Z',
    ],
    riverWide: ['M300 380L340 372', 'M415 378L480 380 490 430 520 458 548 430 545 400', 'M990 450L1040 490'],
    estuary: ['M545 385L590 415 700 410 740 380 800 368 870 370 905 395 920 430 970 455 1030 470'],
    minor: [
      'M415 110L500 115 545 105 600 150 620 170',
      'M620 90L690 150',
      'M545 200L550 270',
      'M545 275L690 215 910 150 915 140 980 95',
      'M620 170L700 150 770 130 880 135 945 90 1040 130 1170 157',
      'M850 212L850 200 930 185 1000 197',
      'M730 270L770 232 845 230',
      'M535 0L505 60 500 110 530 200 550 270 520 380',
      'M400 20L395 240 380 340',
      'M510 0L508 80',
      'M250 160L330 245 430 245 430 360',
      'M330 90L350 160 330 245 330 320',
      'M280 240L350 160 390 160 440 225 495 285',
      'M390 195L405 215 390 215M430 205L545 110',
      'M490 315L545 280',
      'M260 290L290 240 345 180',
      'M70 160L160 290 240 360',
      'M100 130L240 290',
      'M130 110L140 200 190 260',
      'M0 260L100 320 210 345 330 320 380 340',
      'M0 345L90 350 240 350 420 360',
      'M0 380L60 380 130 405 240 360',
      'M90 350L130 420 200 520',
      'M260 270L265 350 250 410 290 450',
      'M270 320L330 300 370 320 375 350 300 360',
      'M240 410L310 380 350 420 355 520 325 600',
      'M250 330L350 310 390 330',
      'M290 450L300 380 350 340',
      'M220 400L280 430 240 420',
      'M385 445L480 490 600 570 690 620 770 690 860 705 890 760 945 770',
      'M355 490L480 490 590 490',
      'M430 400L480 440',
      'M590 450L680 430 800 465 895 460',
      'M645 530L675 430 800 395 860 405 900 455',
      'M550 390L620 360 690 370 690 400 640 390',
      'M580 300L620 325 570 330',
      'M0 520L150 545 240 530 320 580',
      'M0 440L40 435 130 430 300 430',
      'M60 400L45 520 60 600 0 640',
      'M150 545L190 650 210 690',
      'M330 600L410 595 430 605 500 590 610 570 625 550',
      'M470 485L600 560 520 590',
      'M500 590L520 640 585 720 650 845',
      'M325 600L325 665 360 700 415 800 400 805 345 795',
      'M415 800L480 720 550 710 640 730 690 690 745 670',
      'M400 660L345 790 345 840',
      'M485 600L460 650 390 655',
      'M290 450L315 560 275 640 300 760 300 900',
      'M300 430L240 500 210 590 170 690',
      'M120 470L200 540 275 640',
      'M160 470L240 465 300 440',
      'M120 470L170 460 185 490',
      'M750 670L755 620 790 605',
      'M775 695L770 825 820 900',
      'M210 690L190 760 120 860',
      'M0 740L60 720 170 690',
      'M315 450L355 490M310 500L360 520',
      'M480 250L530 320',
    ],
  },
]

const LABELS = [
  { text: 'Thame', x: 59, y: 298.5, w: 109, size: 32, kind: 'town' },
  { text: 'Chesham', x: 309, y: 347.5, w: 151, size: 32, kind: 'town' },
  { text: 'Chilterns AONB', x: 203, y: 403.5, w: 240, size: 31, kind: 'park' },
  { text: 'High Wycombe', x: 215, y: 455.5, w: 227, size: 31, kind: 'village' },
  { text: 'St Albans', x: 502.5, y: 290.5, w: 164, size: 35.5, kind: 'city' },
  { text: 'Great Dunmow', x: 738, y: 178.5, w: 222, size: 31.5, kind: 'village' },
  { text: 'Chelmsford', x: 1054.5, y: 308.5, w: 200, size: 35.5, kind: 'city' },
  { text: 'Basildon', x: 1045.5, y: 493, w: 148, size: 35.5, kind: 'city' },
  { text: 'Southend', x: 1223, y: 522, w: 180, size: 40, kind: 'major' },
  { text: 'Slough', x: 323, y: 563.5, w: 119, size: 35.5, kind: 'city' },
  { text: 'Stanford-le-Hope', x: 1026, y: 582, w: 257, size: 31, kind: 'village' },
  { text: 'Dartford', x: 883, y: 630, w: 146, size: 35.5, kind: 'city' },
  { text: 'Reading', x: 66, y: 619, w: 157, size: 39.5, kind: 'major' },
  { text: 'Bracknell', x: 213, y: 666, w: 152, size: 32, kind: 'town' },
  { text: 'Woking', x: 349, y: 770, w: 128, size: 35.5, kind: 'city' },
  { text: 'Ashtead', x: 526, y: 785, w: 124, size: 31, kind: 'village' },
  { text: 'Guildford', x: 338, y: 866.5, w: 180, size: 39.5, kind: 'major' },
  { text: 'Aldershot', x: 27.5, y: 874, w: 158, size: 32, kind: 'town' },
  { text: 'Sevenoaks', x: 864, y: 827.5, w: 175, size: 32, kind: 'town' },
  { text: 'Maidstone', x: 1092.5, y: 822.5, w: 178, size: 35.5, kind: 'city' },
  { text: 'Gillingham', x: 1131.500, y: 717, w: 184, size: 35.5, kind: 'city' },
  { text: 'Royal Tunbridge', x: 914.5, y: 940.5, w: 279, size: 34.5, kind: 'city' },
  { text: 'Wells', x: 915, y: 977, w: 94, size: 34.5, kind: 'city' },
]

const LABEL_CLASSES = {
  village: 'fill-[#555] font-medium',
  town: 'fill-[#1c1c1c] font-medium',
  city: 'fill-[#161616] font-semibold',
  major: 'fill-[#161616] font-bold',
  park: 'fill-[#4c9f38] font-semibold',
}

const DOTS = [
  [47, 299, 5], [299, 348, 5], [205, 432, 5], [490, 292, 6.5], [972, 162, 5],
  [1042, 311, 6.5], [1035, 495, 6.5], [1209, 525, 7.5], [311, 566, 6.5], [53, 622, 7.5],
  [203, 667, 5], [335, 772, 6.5], [515, 785, 5], [325, 870, 7.5], [197, 851, 5],
  [1015, 558, 5], [1120, 719, 6.5], [1080, 825, 6.5], [854, 828, 5],
]

const SHIELDS = [
  { text: 'A41', x: -16, y: 139, w: 70, tw: 36, kind: 'a' },
  { text: 'A404', x: 156, y: 473, w: 79, tw: 51, kind: 'a' },
  { text: 'A406', x: 595, y: 422, w: 78, tw: 51, kind: 'a' },
  { text: 'A130', x: 1062, y: 390, w: 73, tw: 47, kind: 'a' },
  { text: 'A316', x: 469, y: 593, w: 74, tw: 47, kind: 'a' },
  { text: 'A1(M)', x: 546, y: 149, w: 78, tw: 53, kind: 'm' },
  { text: 'M25', x: 621, y: 340, w: 66, tw: 40, kind: 'm' },
  { text: 'M2', x: 1025, y: 699, w: 60, tw: 33, kind: 'm' },
  { text: 'M20', x: 1172, y: 857, w: 66, tw: 41, kind: 'm' },
  { text: 'M23', x: 600, y: 896, w: 67, tw: 41, kind: 'm' },
  { text: '', x: -50, y: 822, w: 62, tw: 0, kind: 'm' },
]

function Layer({ name, ...rest }) {
  return TILES.filter((tile) => tile[name]).map((tile) => (
    <g key={tile.id} transform={`translate(${tile.x} ${tile.y}) scale(0.33333)`}>
      <path d={tile[name].join('')} {...rest} />
    </g>
  ))
}

function Shield({ text, x, y, w, tw, kind }) {
  const green = kind === 'a'
  return (
    <g transform={`translate(${x} ${y})`}>
      <rect width={w} height="48" rx="10" fill={green ? '#2f7344' : '#1f62f5'} />
      <rect x="3.7" y="3.7" width={w - 7.4} height="40.6" rx="7" fill={green ? '#3f7650' : '#3271f2'} stroke="#fff" strokeWidth="3" />
      {text && (
        <text
          x={w / 2}
          y="33.5"
          textAnchor="middle"
          textLength={tw}
          lengthAdjust="spacingAndGlyphs"
          className={green ? 'fill-[#fbd13c] text-[26px] font-bold' : 'fill-white text-[26px] font-bold'}
        >
          {text}
        </text>
      )}
    </g>
  )
}

function VenueMap() {
  return (
    <div className="relative h-[798px] shrink-0 overflow-hidden bg-[#d5efab]">
      <svg viewBox="0 163 1242 798" className="block h-full w-full">
        <defs>
          <filter id="rough" x="0" y="0" width="100%" height="100%" colorInterpolationFilters="sRGB">
            <feTurbulence type="fractalNoise" baseFrequency="0.07" numOctaves="3" seed="4" />
            <feDisplacementMap in="SourceGraphic" scale="16" xChannelSelector="R" yChannelSelector="G" />
          </filter>
          <filter id="soft" x="-50%" y="-50%" width="200%" height="200%">
            <feGaussianBlur stdDeviation="7" />
          </filter>
        </defs>

        <g filter="url(#rough)">
          <rect x="-20" y="140" width="1290" height="840" fill="#d5efab" />
          <Layer name="shade" fill="#ccecA4" />
          <Layer name="forest" fill="#bfe09c" />
          <Layer name="urban" fill="#f4f5ee" />
          <Layer name="park" fill="#cdeca6" />
          <Layer name="airport" fill="#e2e9f5" />
          <Layer name="lake" fill="#a2daf4" />
        </g>
        <Layer name="reserve" fill="#b4e095" fillOpacity="0.55" stroke="#86cc82" strokeWidth="6" />
        <g fill="none" stroke="#9bdcf7" strokeLinejoin="round" strokeLinecap="round">
          <Layer name="river" strokeWidth="8" />
          <Layer name="riverWide" strokeWidth="13" />
          <Layer name="estuary" strokeWidth="30" />
        </g>
        <g fill="none" strokeLinejoin="round">
          <Layer name="minor" stroke="#b0aeb4" strokeWidth="6" />
          <Layer name="major" stroke="#98a2c5" strokeWidth="24" />
          <Layer name="major" stroke="#bbc3da" strokeWidth="12" />
        </g>

        {DOTS.map(([cx, cy, r]) => (
          <circle key={`${cx}-${cy}`} cx={cx} cy={cy} r={r} fill="#161616" stroke="#fff" strokeOpacity="0.8" strokeWidth="2" />
        ))}

        {LABELS.map(({ text, x, y, w, size, kind }) => (
          <text
            key={text}
            x={x}
            y={y}
            fontSize={size}
            textLength={w}
            stroke="#f7f8f2"
            strokeWidth="5"
            strokeLinejoin="round"
            paintOrder="stroke"
            className={LABEL_CLASSES[kind]}
          >
            {text}
          </text>
        ))}

        <g>
          <circle cx="175" cy="391" r="20" fill="#5cb144" />
          <path d="M166 393a5.500 5.500 0 0 1 1-9a6 6 0 0 1 7-3a7 7 0 0 1 8 4a5 5 0 0 1 1 8.500q-4 1.500-6.500-.5V399l2.500 1.500h-8l2.500-1.500V393q-4 2.500-7.500 0z" fill="#fff" />
        </g>

        {SHIELDS.map((shield) => (
          <Shield key={`${shield.x}-${shield.y}`} {...shield} />
        ))}

        <circle cx="667" cy="571" r="10.500" fill="#fff" stroke="#161616" strokeWidth="7" />
        <text
          x="685"
          y="560.5"
          textLength="218"
          stroke="#f7f8f2"
          strokeWidth="6"
          strokeLinejoin="round"
          paintOrder="stroke"
          className="fill-[#141414] text-[59px] font-bold"
        >
          London
        </text>

        {/* venue pin */}
        <ellipse cx="652" cy="506" rx="26" ry="14" fill="#000" fillOpacity="0.33" filter="url(#soft)" transform="rotate(-35 652 506)" />
        <path d="M615 562q5 3 10 0" fill="none" stroke="#444" strokeWidth="3" />
        <path d="M620 490V563" stroke="#a5a5a7" strokeWidth="4.500" />
        <circle cx="620" cy="472.500" r="21.300" fill="#eb4d3d" />
        <circle cx="613" cy="465.300" r="5" fill="#fff" />

        {/* current location */}
        <circle cx="854" cy="629" r="36" fill="#000" fillOpacity="0.3" filter="url(#soft)" />
        <circle cx="854" cy="625" r="35" fill="#fff" />
        <circle cx="854" cy="625" r="25.500" fill="#3478f6" />
      </svg>

      <div className="absolute bottom-[25px] left-[32px] flex items-end text-[#2d2d20]/75">
        <FaApple className="mb-[7px] h-[42px] w-[36px]" />
        <span className="ml-[1px] text-[49px] leading-[52px] tracking-[-0.7px]">Maps</span>
      </div>
      <span className="absolute right-[43px] bottom-[30px] border-b-[3px] border-black/45 text-[30px] leading-[32px] tracking-[0.6px] text-black/50">
        Legal
      </span>
    </div>
  )
}

function Header() {
  return (
    <header className="flex h-[163px] shrink-0 items-start justify-between bg-[#36756c] pt-[38px] pr-[30px] pl-[56px]">
      <svg width="116" height="96" viewBox="56 38 116 96" fill="none" stroke="#fff" strokeWidth="9" strokeLinecap="round" strokeLinejoin="round">
        <path d="M92 58.500L69 86L92 114.500M69 86H136M150 86H159" />
      </svg>
      <h1 className="flex-1 pt-[16px] pr-[39px] text-center text-[52px] leading-[68px] font-semibold tracking-[-0.15px] text-white">
        Choose Your Venue
      </h1>
      <svg width="108" height="108" viewBox="0 21 324 324" fill="none" stroke="#fff" strokeWidth="18" strokeLinecap="round" strokeLinejoin="round">
        <path d="M31 175A110 110 0 0 1 230 106M234 52V112L176 130" />
        <path d="M252 172A110 110 0 0 1 56 242M49 298V238L106 217" />
      </svg>
    </header>
  )
}

function VenueRow({ name, status, distance }) {
  return (
    <li className="ml-[51px] flex h-[217px] items-center justify-between border-b-2 border-[#dadada] pr-[48px]">
      <div className="-ml-[3px] pt-[19px]">
        <p className="text-[50px] leading-[76px] tracking-[-0.75px] text-[#121212]">{name}</p>
        <p className="text-[43.500px] leading-[77px] tracking-[0.02px] text-[#a6d56e]">{status}</p>
      </div>
      <p className="-mr-[1px] pt-[3px] text-[45px] font-semibold tracking-[0.45px] text-black">{distance}</p>
    </li>
  )
}

function BadgeIcon() {
  const teeth = Array.from({ length: 12 }, (_, i) => (i * Math.PI) / 6)
  return (
    <g>
      <circle cx="1158" cy="137" r="43" fill="currentColor" />
      {teeth.map((a) => (
        <circle key={a} cx={1158 + 40 * Math.cos(a)} cy={137 + 40 * Math.sin(a)} r="8" fill="currentColor" />
      ))}
      <path d="M1158 160L1140 142Q1132 130 1141 123Q1151 118 1158 129Q1165 118 1175 123Q1184 130 1176 142Z" fill="#fdfdfd" />
    </g>
  )
}

const TABS = [
  {
    label: 'Home',
    viewBox: '45 60 360 300',
    icon: (
      <g fill="none" stroke="currentColor" strokeWidth="15" strokeLinecap="round" strokeLinejoin="round">
        <path d="M83 194L225 90L367 194" strokeLinejoin="miter" />
        <path d="M116 208V342H194V268Q194 235 225 235T256 268V342H334V208" />
      </g>
    ),
  },
  {
    label: 'Activity',
    viewBox: '978 60 360 300',
    icon: (
      <g>
        <BadgeIcon />
        <path d="M1016 289L1276 185" stroke="currentColor" strokeWidth="6" strokeLinecap="round" />
        <path d="M1283 166L1303 172L1293 194Z" fill="currentColor" stroke="currentColor" strokeWidth="3" strokeLinejoin="round" />
        <g fill="#fdfdfd" stroke="currentColor" strokeWidth="6">
          <circle cx="1077" cy="265" r="11" />
          <circle cx="1158" cy="233" r="11" />
          <circle cx="1238" cy="201" r="11" />
        </g>
        <path d="M1054 304h47v38h-47zM1134 288h48v54h-48zM1215 243h47v99h-47z" fill="currentColor" />
      </g>
    ),
  },
  {
    label: 'Order',
    active: true,
    viewBox: '108 60 360 300',
    icon: (
      <g fill="none" stroke="currentColor" strokeWidth="15" strokeLinecap="round" strokeLinejoin="round">
        <path d="M212 140H366Q376 140 377 150L389 304Q388 338 352 344H224Q188 338 187 304L199 150Q200 140 212 140Z" />
        <path d="M244 169V130A44 44 0 0 1 333 130V169M256 239L278 261L320 218" />
      </g>
    ),
  },
  {
    label: 'More',
    viewBox: '1041 60 360 300',
    icon: (
      <g fill="currentColor">
        <circle cx="1144" cy="215" r="25.500" />
        <circle cx="1221" cy="215" r="25.500" />
        <circle cx="1298" cy="215" r="25.500" />
      </g>
    ),
  },
]

function TabBar() {
  return (
    <nav className="mt-auto grid h-[178px] grid-cols-4">
      {TABS.map((tab) => (
        <button
          key={tab.label}
          type="button"
          className={tab.active ? 'flex flex-col items-center text-[#2e756b]' : 'flex flex-col items-center text-[#959595]'}
        >
          <svg width="120" height="100" viewBox={tab.viewBox}>
            {tab.icon}
          </svg>
          <span className="mt-[5px] text-[31px] leading-[38px] font-medium tracking-[0.6px]">{tab.label}</span>
        </button>
      ))}
    </nav>
  )
}

export default function App() {
  return (
    <div className="flex h-[2208px] w-[1242px] flex-col overflow-hidden bg-[#fdfdfd] font-['Inter','Liberation_Sans',sans-serif]">
      <Header />
      <VenueMap />
      <main>
        <h2 className="mx-[48px] flex h-[166px] items-center justify-center border-b-2 border-[#e6e6e6] pr-[4px] text-[56px] tracking-[-1.2px] text-[#2b2b2b]">
          Choose a venue to order from
        </h2>
        <ul>
          <VenueRow name="Eaton Place" status="Venue Open. Closes at 16:00" distance="15.18 miles" />
        </ul>
      </main>
      <TabBar />
    </div>
  )
}
